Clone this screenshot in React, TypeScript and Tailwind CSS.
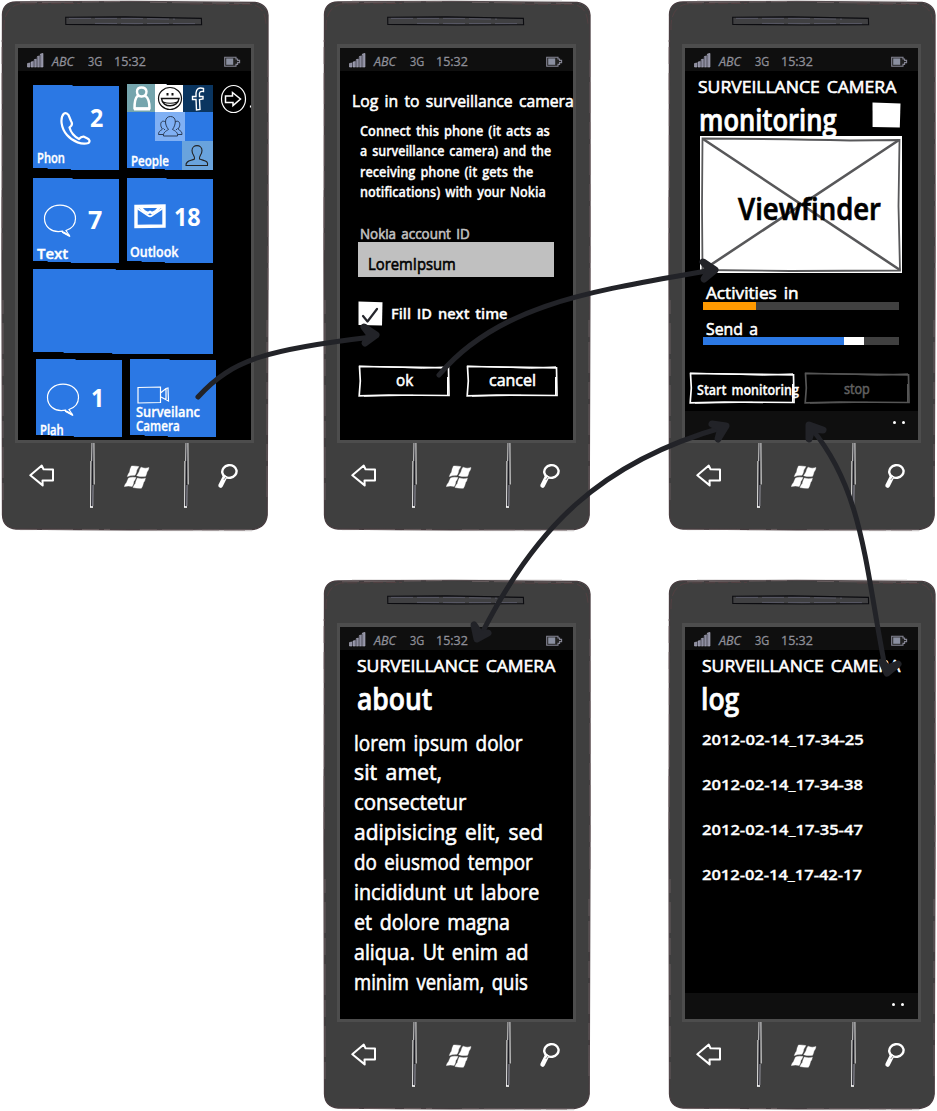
import { useLayoutEffect, useRef, type ReactNode } from "react";

/* Text with wide word gaps, scaled so that the line spans `w` pixels. */
function T({ w, children, className = "" }: { w: number; children: string; className?: string }) {
  const ink = useRef<HTMLSpanElement>(null);
  useLayoutEffect(() => {
    if (!ink.current) return;
    ink.current.style.transform = `translateY(1px) scaleX(${w / ink.current.offsetWidth})`;
  }, [w, children]);
  return (
    <span style={{ width: w }} className={`block shrink-0 whitespace-pre ${className}`}>
      <span ref={ink} className="inline-block origin-left align-top [word-spacing:0.14em]">{children}</span>
    </span>
  );
}

function Signal() {
  return (
    <svg width="17" height="15" viewBox="0 0 17 15" className="shrink-0">
      <g fill="#8d8da0" stroke="#b4b4c4" strokeWidth="0.6">
        <path d="M0.5 10.5 3 10v4H.5zM4 9l2.5-.6V14H4zM7.3 6.6l2.2-.5V14H7.3zM10.4 3.5l2.2-.6V14h-2.2zM13.4 1l2.6-.6V14h-2.6z" />
      </g>
      <path d="M3.4 14V9.5M7 14V7M10 14V4M13 14V2" stroke="#3c3c4c" strokeWidth="0.7" />
    </svg>
  );
}

function Battery() {
  return (
    <svg width="17" height="11" viewBox="0 0 17 11" className="shrink-0">
      <path d="M.7 1.2H12V3h1.6v1.4h2v2.2h-2V8.4H12v1.8H.7z" fill="#222" stroke="#858594" strokeWidth="1.1" />
      <rect x="2.2" y="2.4" width="7" height="6.4" fill="#8a8fa0" />
    </svg>
  );
}

function StatusBar() {
  return (
    <div className="flex h-[23px] shrink-0 items-start bg-[#0f0f0f] pl-[9px] text-[12.5px] leading-[20px] text-[#8f8f99] [-webkit-text-stroke:0.3px]">
      <div className="mt-[5px] flex"><Signal /></div>
      <T w={22} className="ml-[8px] mt-[3px] italic">ABC</T>
      <T w={14} className="ml-[14px] mt-[3px]">3G</T>
      <T w={32} className="ml-[12px] mt-[3px]">15:32</T>
      <div className="ml-[78px] mt-[8px] flex"><Battery /></div>
    </div>
  );
}

function Divider() {
  return (
    <svg width="5" height="66" viewBox="0 0 5 66" className="shrink-0">
      <path d="M3 0 1.800 64" stroke="#1c1c24" strokeWidth="1.300" />
      <path d="M.9 18 .6 64" stroke="#fff" strokeWidth="0.9" />
      <path d="M0 64H3" stroke="#fff" strokeWidth="1.600" />
      <path d="M2 0 1.700 18" stroke="#fff" strokeWidth="0.8" />
      <path d="M3.900 0 4.200 41.500" stroke="#fff" strokeWidth="0.9" />
      <path d="M3 42 2.800 63" stroke="#c9c9d8" strokeWidth="0.7" />
    </svg>
  );
}

function NavKeys() {
  return (
    <div className="flex items-start pl-[29px]">
      <svg width="25" height="23" viewBox="0 0 25 23" className="mt-[21px] shrink-0">
        <path d="M1.300 11.300 12.800 1.600 14.500 5.200 24 5.400 24 16.400 13.500 16.400 13.700 21.400 Z" fill="none" stroke="#fff" strokeWidth="2" strokeLinejoin="round" />
      </svg>
      <div className="ml-[36px] flex"><Divider /></div>
      <svg width="26" height="24" viewBox="0 0 26 24" className="ml-[29px] mt-[22px] shrink-0" fill="#fff" stroke="#fff" strokeWidth="0.4">
        <path d="M7.500 1Q11 .8 14.800 1.600 14 3.500 12.800 5 12.600 7.500 11 10.200 7 10 3.300 11.600 4.200 8.500 5.600 7 6 3.500 7.500 1Z" />
        <path d="M17 2.200Q21 4 25 2.600 24.500 5.500 23 7 22.500 9.500 21.600 11.300 17 12 12.700 10.700 14 8.500 15 7 15.500 4 17 2.200Z" />
        <path d="M4.600 13Q8 11.500 12 12.600 11 15 9.800 16.400 9.600 19 8.200 21.400 4 20.500 .3 21.600 1 19 2.600 17.500 3.500 15 4.600 13Z" />
        <path d="M13.400 13Q17 14.500 21.400 13.200 21 16 19.600 17.400 19 20.500 17.400 23.200 13 23.500 9 22.500 10 20 11.400 18.400 12 15.500 13.400 13Z" />
      </svg>
      <div className="ml-[34px] flex"><Divider /></div>
      <svg width="22" height="26" viewBox="0 0 22 26" className="ml-[27px] mt-[20px] shrink-0" fill="none" stroke="#fff">
        <ellipse cx="13.400" cy="8.500" rx="7.200" ry="6.300" strokeWidth="2.400" transform="rotate(-10 13.400 8.500)" />
        <path d="M8.600 14.500 4.600 22.500" strokeWidth="4.600" strokeLinecap="round" />
        <path d="M10 14 7.800 17" stroke="#3f3f3f" strokeWidth="0.6" />
      </svg>
    </div>
  );
}

function Casing() {
  return (
    <svg width="270" height="532" viewBox="0 0 270 532" className="absolute inset-0">
      <path d="M2.5 16C2 7 7 2 16 2L130 1.4 255 2.4Q267 4 268 15L268 250 267.2 515Q266 528 252 529.6L130 530 16 529Q3 528 2.5 515L2 260Z" fill="#3f3f3f" stroke="#483d40" strokeWidth="1.300" />
      <path d="M2 250V40M3 500V300M268 60V290M267 320V505M20 529.6 110 529.4M140 529.8 245 530.4M20 2.8 120 1.6M150 2.4 250 3.4" stroke="#75696a" strokeWidth="0.7" strokeDasharray="17 5 31 9" fill="none" />
      <path d="M80 530.5 252 531M1.5 90V190M30 .6 240 .8" stroke="#cfcaca" strokeWidth="0.5" fill="none" />
      <path d="M4 30Q3 8 19 4L80 3.4M190 4 253 4.6Q265 7 266 24" stroke="#574043" strokeWidth="0.8" fill="none" strokeDasharray="10 3" />
    </svg>
  );
}

function Phone({ children }: { children: ReactNode }) {
  return (
    <div className="relative h-[532px] w-[270px] shrink-0">
      <Casing />
      <div className="relative flex flex-col pt-[16px]">
        <svg width="138" height="10" viewBox="0 0 138 10" className="ml-[65px]">
          <path d="M.7 1.3 60 .9 136.4 2.4 136.6 8.6 70 9 .8 8.4Z" fill="#404042" stroke="#0c0c10" strokeWidth="1.1" />
          <path d="M4 2.4 66 2.4 110 3.2M30 7.4 134 7.6" stroke="#68687c" strokeWidth="0.6" fill="none" strokeDasharray="22 4" />
        </svg>
        <div className="ml-[15px] mt-[18px] flex h-[399px] w-[239px] flex-col border-x-[3px] border-b-[3px] border-t-[4px] border-[#4d4d4d] bg-black">
          <StatusBar />
          {children}
        </div>
        <NavKeys />
      </div>
    </div>
  );
}

function Tile({ className = "", children }: { className?: string; children?: ReactNode }) {
  return (
    <div className={`flex w-[86px] flex-col bg-[#2b78e4] [clip-path:polygon(0_0,46%_0,46%_1px,100%_1px,100%_100%,44%_100%,44%_calc(100%-1px),17%_calc(100%-1px),17%_calc(100%-2px),0_calc(100%-2px))] ${className}`}>
      {children}
    </div>
  );
}

const count = "text-[25px] font-bold leading-[22px]";
const label = "text-[14px] font-semibold leading-[16px] [-webkit-text-stroke:0.35px]";

function Bubble() {
  return (
    <svg width="34" height="34" viewBox="0 0 34 34" className="shrink-0" fill="none" stroke="#fff" strokeWidth="1.2">
      <path d="M19.5 27.2C8 29.500 1.500 22 1.500 14.500 1.500 6 9 1.200 17 1.200 26 1.200 32.500 7 32.500 14.500 32.500 20 29 24.500 23 26.500L27 32.500 19.500 28.500 19.500 27.200Z" />
      <path d="M20 28 26.500 31.800" strokeWidth="1.600" />
    </svg>
  );
}

function HomeScreen() {
  return (
    <div className="flex flex-col pl-[15px] pt-[14px] text-white">
      <div className="flex gap-[8px]">
        <Tile className="h-[85px]">
          <div className="flex h-[64px] items-start">
            <svg width="31" height="33" viewBox="0 0 31 33" className="ml-[27px] mt-[27px] shrink-0" fill="none" stroke="#fff" strokeWidth="2.200" strokeLinejoin="round">
              <path d="M4 1.600C-.3 6 1 16 7 23 13 30 22 33 28.500 31Q31 28.500 27.500 26.500L23.500 24.600Q21 24.500 19 27 11.500 23 9.500 15.500 13.500 13 11 9L8.500 3Q6 .4 4 1.600Z" />
            </svg>
            <T w={13} className={`-ml-[1px] mt-[20px] ${count}`}>2</T>
          </div>
          <T w={28} className={`ml-[4px] ${label}`}>Phon</T>
        </Tile>
        <Tile className="-mt-[1px] h-[86px]">
          <div className="flex h-[28px]">
            <svg width="28" height="28" viewBox="0 0 28 28" fill="none" stroke="#fff" className="shrink-0 bg-[#75a5ad]">
              <path d="M10.500 12C8 14 7.500 19 7.500 24.500H22.500C22.500 18 21.500 14 18.500 12Z" strokeWidth="2.500" strokeLinejoin="round" />
              <path d="M7 25H23" strokeWidth="3" />
              <path d="M10 7.500Q10 3.500 14.500 3.500T19.500 7.500Q19.500 12 14.500 12.500 10 12 10 7.500Z" strokeWidth="2.400" fill="#75a5ad" />
            </svg>
            <svg width="28" height="28" viewBox="0 0 28 28" fill="none" stroke="#111" strokeWidth="1.200" className="shrink-0 bg-white">
              <ellipse cx="15" cy="14.500" rx="11.500" ry="11" />
              <path d="M6.500 14.500H24C23 24 7.500 24.500 6.500 14.500Z" strokeWidth="1.500" />
              <path d="M8 18Q15 20.500 22.500 18" />
              <path d="M12.500 9v2.500M17.500 9v2.500" strokeWidth="2" />
            </svg>
            <svg width="30" height="28" viewBox="0 0 30 28" fill="none" stroke="#fff" strokeWidth="1.400" className="shrink-0 bg-[#0a3560]">
              <path d="M20.500 4.500Q13.500 2.500 13 9V12.500H9.500V15.500H13L13.500 26 17 25.500 16.500 15.500 20 15V12.500H16.500C16 8 17 7 20.500 7.500Z" />
            </svg>
          </div>
          <svg width="30" height="29" viewBox="0 0 30 29" fill="none" stroke="#2a3c58" strokeWidth="1" className="ml-[28px] shrink-0 bg-[#80b0f4]">
            <path d="M8.500 24C8 20.500 11 19 13.500 17.500 9 12 9.500 4.500 15.500 4.500S21.500 12 17.500 17.500C20.500 19 23 20.500 22.500 24Z" />
            <path d="M10.500 10C6 7 4 13 7.500 17 6.500 18.500 3.500 18.500 3.500 22.500H8.500M20 10C24.500 7 26.500 13 23 17 24 18.500 27 18.500 27 22.500H22.500" />
            <path d="M10 18 8.500 16.500M21 18 22.500 16.500" />
          </svg>
          <div className="flex h-[29px] items-end">
            <T w={38} className={`mb-[2px] ml-[4px] ${label}`}>People</T>
            <svg width="31" height="29" viewBox="0 0 31 29" className="ml-[13px] shrink-0 bg-[#69a3dd]" fill="none" stroke="#222" strokeWidth="1.100">
              <path d="M4 24.500C3.500 19.500 9 20 12.500 18 13.500 15.500 10 14 10 9.500 10 3 20 3 20 9.500 20 14 16.500 15.500 17.500 18 22.500 20 26.500 19.500 25.500 24.500Z" />
            </svg>
          </div>
        </Tile>
        <svg width="31" height="30" viewBox="0 0 31 30" className="-ml-[1px] -mt-[1px] shrink-0" fill="none" stroke="#fff" strokeWidth="1.200">
          <ellipse cx="13.500" cy="15" rx="12" ry="13.500" />
          <path d="M5.500 12H12.500V8.500L20.500 15 13 21.500V18.500H5.500Z" strokeWidth="1.500" />
          <path d="M30.500 21.500v2" />
        </svg>
      </div>

      <div className="mt-[8px] flex gap-[8px]">
        <Tile className="h-[85px]">
          <div className="flex h-[67px] items-start">
            <div className="ml-[10px] mt-[26px] flex"><Bubble /></div>
            <T w={14} className={`ml-[11px] mt-[29px] ${count}`}>7</T>
          </div>
          <T w={31} className={`ml-[4px] ${label}`}>Text</T>
        </Tile>
        <Tile className="h-[85px]">
          <div className="flex h-[65px] items-start">
            <svg width="32" height="25" viewBox="0 0 32 25" className="ml-[7px] mt-[26px] shrink-0" fill="none" stroke="#fff">
              <path d="M2 2.500 30 2V22L2 22.500Z" strokeWidth="3.400" />
              <path d="M2 3.500 14 11.500Q16 13 18 11.500L30 3.500" strokeWidth="2" />
              <path d="M6 3 10 7 14 9 16 8 18 9 22 7 26 3" strokeWidth="2.500" />
            </svg>
            <T w={27} className={`ml-[8px] mt-[26px] ${count}`}>18</T>
          </div>
          <T w={48} className={`ml-[3px] ${label}`}>Outlook</T>
        </Tile>
      </div>

      <Tile className="mt-[6px] h-[85px] w-[180px]!" />

      <div className="ml-[3px] mt-[5px] flex gap-[8px]">
        <Tile className="h-[78px]">
          <div className="flex h-[62px] items-start">
            <div className="ml-[10px] mt-[24px] flex"><Bubble /></div>
            <T w={13} className={`ml-[11px] mt-[26px] ${count}`}>1</T>
          </div>
          <T w={24} className={`ml-[4px] ${label}`}>Plah</T>
        </Tile>
        <Tile className="h-[78px]">
          <svg width="33" height="18" viewBox="0 0 33 18" className="ml-[7px] mt-[27px] shrink-0" fill="none" stroke="#fff" strokeWidth="1.200">
            <path d="M1 1.500 23.500 1V16.500L1 17ZM23.500 7 29 2.500 31 2 31.500 15 24 11M29 3V14.500" />
          </svg>
          <T w={64} className={`ml-[6px] ${label} leading-[14px]!`}>Surveilanc</T>
          <T w={44} className={`ml-[6px] ${label} leading-[14px]!`}>Camera</T>
        </Tile>
      </div>
    </div>
  );
}

function SketchButton({ w, color, strokeW, children }: { w: number; color: string; strokeW: number; children: ReactNode }) {
  return (
    <div className="relative h-[32px] shrink-0" style={{ width: w }}>
      <svg width={w} height="32" viewBox={`0 0 ${w} 32`} className="absolute inset-0" fill="none" stroke={color} strokeWidth={strokeW}>
        <path d={`M1.500 1.500 ${w / 2} 2.200 ${w - 1.500} 2.800 ${w - 1} 30.500 ${w / 3} 30 1.200 30.800 2.300 16Z`} />
        <path d={`M1 1 ${w * 0.7} 3.200 ${w - 2} 1.800M${w - 2.500} 12V30M6 31.200 ${w * 0.6} 30.300`} strokeWidth="1" />
      </svg>
      <div className="relative flex h-full">{children}</div>
    </div>
  );
}

const body = "font-medium [-webkit-text-stroke:0.6px]";
const small = "text-[13.500px] font-semibold [-webkit-text-stroke:0.3px]";

function LoginScreen() {
  return (
    <div className="flex flex-col text-white">
      <T w={222} className={`ml-[12px] mt-[19px] text-[17px] leading-[20px] ${body}`}>Log in to surveillance camera</T>
      <div className={`ml-[20px] mt-[10px] h-[82px] leading-[20.400px] ${small}`}>
        <T w={190}>Connect this phone (it acts as</T>
        <T w={191}>a surveillance camera) and the</T>
        <T w={173}>receiving phone (it gets the</T>
        <T w={186}>notifications) with your Nokia</T>
      </div>
      <T w={110} className={`ml-[20px] mt-[22px] h-[18px] text-[14px] leading-[18px] text-[#c0c0c0] ${body}`}>Nokia account ID</T>
      <div className="ml-[18px] h-[35px] w-[196px] bg-[#c0c0c0] pl-[10px] pt-[3px] text-black">
        <T w={88} className={`text-[16.500px] leading-[35px] ${body}`}>LoremIpsum</T>
      </div>
      <div className="ml-[18px] mt-[24px] flex">
        <svg width="25" height="25" viewBox="0 0 25 25" className="shrink-0">
          <path d="M.5.5 24.500 1.200 24 24.500.5 24Z" fill="#fff" />
          <path d="M5 15 9.500 20.500 19 8" fill="none" stroke="#25262c" strokeWidth="2.200" strokeLinecap="round" strokeLinejoin="round" />
        </svg>
        <T w={117} className={`ml-[8px] leading-[25px] ${small}`}>Fill ID next time</T>
      </div>
      <div className={`ml-[18px] mt-[39px] flex gap-[16px] text-[17px] leading-[27px] ${body}`}>
        <SketchButton w={92} color="#fff" strokeW={1.7}><T w={17} className="ml-[38px]">ok</T></SketchButton>
        <SketchButton w={92} color="#fff" strokeW={1.7}><T w={47} className="ml-[23px]">cancel</T></SketchButton>
      </div>
    </div>
  );
}

function AppBar({ className }: { className: string }) {
  return (
    <div className={`flex shrink-0 justify-end gap-[6px] bg-[#0f0f0f] ${className}`}>
      <i className="size-[3px] rounded-full bg-white" />
      <i className="size-[3px] rounded-full bg-white" />
    </div>
  );
}

const appTitle = `mt-[5px] text-[17px] leading-[20px] ${body}`;
const pageTitle = "text-[30px] font-semibold leading-[41px] [-webkit-text-stroke:0.7px]";

function MonitoringScreen() {
  return (
    <div className="flex flex-col text-white">
      <T w={198} className={`ml-[13px] ${appTitle}`}>SURVEILLANCE CAMERA</T>
      <div className="mt-[2px] flex h-[38px] pl-[14px]">
        <T w={138} className={pageTitle}>monitoring</T>
        <svg width="29" height="26" viewBox="0 0 29 26" className="ml-[35px] mt-[4px]"><path d="M.5.5 28.500 1.500 27.800 25.500.6 25Z" fill="#fff" /></svg>
      </div>
      <div className="relative ml-[15px] h-[137px] w-[202px] bg-white pl-[38px] pt-[51px] text-black">
        <svg width="202" height="137" viewBox="0 0 202 137" className="absolute inset-0" fill="none" stroke="#58585a">
          <path d="M2.500 2.500Q90 3 150 4.500L199.500 4 198.500 70 200 134.500 90 135 2.500 134 2 70Z" strokeWidth="1.800" />
          <path d="M3 3 200 134M199 4 3 134" strokeWidth="2.600" />
        </svg>
        <T w={143} className={`relative ${pageTitle}`}>Viewfinder</T>
      </div>
      <T w={93} className={`ml-[21px] mt-[9px] h-[19px] text-[17px] leading-[20px] ${body}`}>Activities in</T>
      <div className="ml-[18px] mt-px flex h-[8px] w-[196px] bg-[#404040]">
        <div className="w-[53px] bg-[#ff9900]" />
      </div>
      <T w={52} className={`ml-[21px] mt-[8px] h-[18px] text-[17px] leading-[20px] ${body}`}>Send a</T>
      <div className="ml-[18px] mt-px flex h-[8px] w-[196px] bg-[#404040]">
        <div className="w-[141px] bg-[#2b78e4]" />
        <div className="w-[20px] bg-white" />
      </div>
      <div className="ml-[4px] mt-[27px] flex gap-[9px]">
        <SketchButton w={106} color="#fff" strokeW={1.7}>
          <T w={102} className={`ml-[8px] leading-[35px] ${small}`}>Start monitoring</T>
        </SketchButton>
        <SketchButton w={106} color="#555" strokeW={1.7}>
          <T w={26} className={`ml-[40px] text-[15px] leading-[30px] text-[#606060] ${body}`}>stop</T>
        </SketchButton>
      </div>
      <AppBar className="mt-[7px] h-[29px] pr-[13px] pt-[10px]" />
    </div>
  );
}

function AboutScreen() {
  return (
    <div className="flex flex-col text-white">
      <T w={198} className={`ml-[17px] ${appTitle}`}>SURVEILLANCE CAMERA</T>
      <T w={75} className={`ml-[17px] mt-[2px] h-[38px] ${pageTitle}`}>about</T>
      <div className={`ml-[14px] mt-[11.500px] text-[21.500px] leading-[29.900px] ${body}`}>
        <T w={168}>lorem ipsum dolor</T>
        <T w={88}>sit amet,</T>
        <T w={112}>consectetur</T>
        <T w={189}>adipisicing elit, sed</T>
        <T w={179}>do eiusmod tempor</T>
        <T w={185}>incididunt ut labore</T>
        <T w={156}>et dolore magna</T>
        <T w={175}>aliqua. Ut enim ad</T>
        <T w={174}>minim veniam, quis</T>
      </div>
    </div>
  );
}

function LogScreen() {
  return (
    <div className="flex grow flex-col text-white">
      <T w={198} className={`ml-[17px] ${appTitle}`}>SURVEILLANCE CAMERA</T>
      <T w={38} className={`ml-[16px] mt-[2px] h-[38px] ${pageTitle}`}>log</T>
      <div className="ml-[17px] mt-px text-[14.500px] font-semibold leading-[45px] [-webkit-text-stroke:0.3px]">
        <T w={162}>2012-02-14_17-34-25</T>
        <T w={161}>2012-02-14_17-34-38</T>
        <T w={161}>2012-02-14_17-35-47</T>
        <T w={160}>2012-02-14_17-42-17</T>
      </div>
      <AppBar className="mt-auto h-[26px] pr-[14px] pt-[10px]" />
    </div>
  );
}

function Connectors() {
  return (
    <svg width="937" height="1111" viewBox="0 0 937 1111" className="pointer-events-none absolute inset-0" fill="none" stroke="#222328" strokeLinecap="round" strokeLinejoin="round">
      <g strokeWidth="5">
        <path d="M198 397C232 359 270 349 372 337" />
        <path d="M439 375C500 302 600 290 712 270" />
        <path d="M724 427C600 462 535 528 481 635" />
        <path d="M811 428C863 490 865 565 885 667" />
      </g>
      <g strokeWidth="7" fill="#222328">
        <path d="M364 327 376 335 365 343 370 335Z" />
        <path d="M703 262 715 270 704 279 710 270Z" />
        <path d="M712 424 726 426 718 439 721 428Z" />
        <path d="M474 625 477 639 488 633 480 634Z" />
        <path d="M809 439 809 425 823 430 812 429Z" />
        <path d="M882 662 887 673 898 664 888 668Z" />
      </g>
    </svg>
  );
}

export default function App() {
  return (
    <div className="relative flex h-[1111px] w-[937px] flex-col gap-[47px] overflow-hidden bg-white font-['Open_Sans','Noto_Sans',sans-serif]">
      <div className="flex">
        <Phone><HomeScreen /></Phone>
        <div className="ml-[52px]"><Phone><LoginScreen /></Phone></div>
        <div className="ml-[75px]"><Phone><MonitoringScreen /></Phone></div>
      </div>
      <div className="flex pl-[322px]">
        <Phone><AboutScreen /></Phone>
        <div className="ml-[75px]"><Phone><LogScreen /></Phone></div>
      </div>
      <Connectors />
    </div>
  );
}
